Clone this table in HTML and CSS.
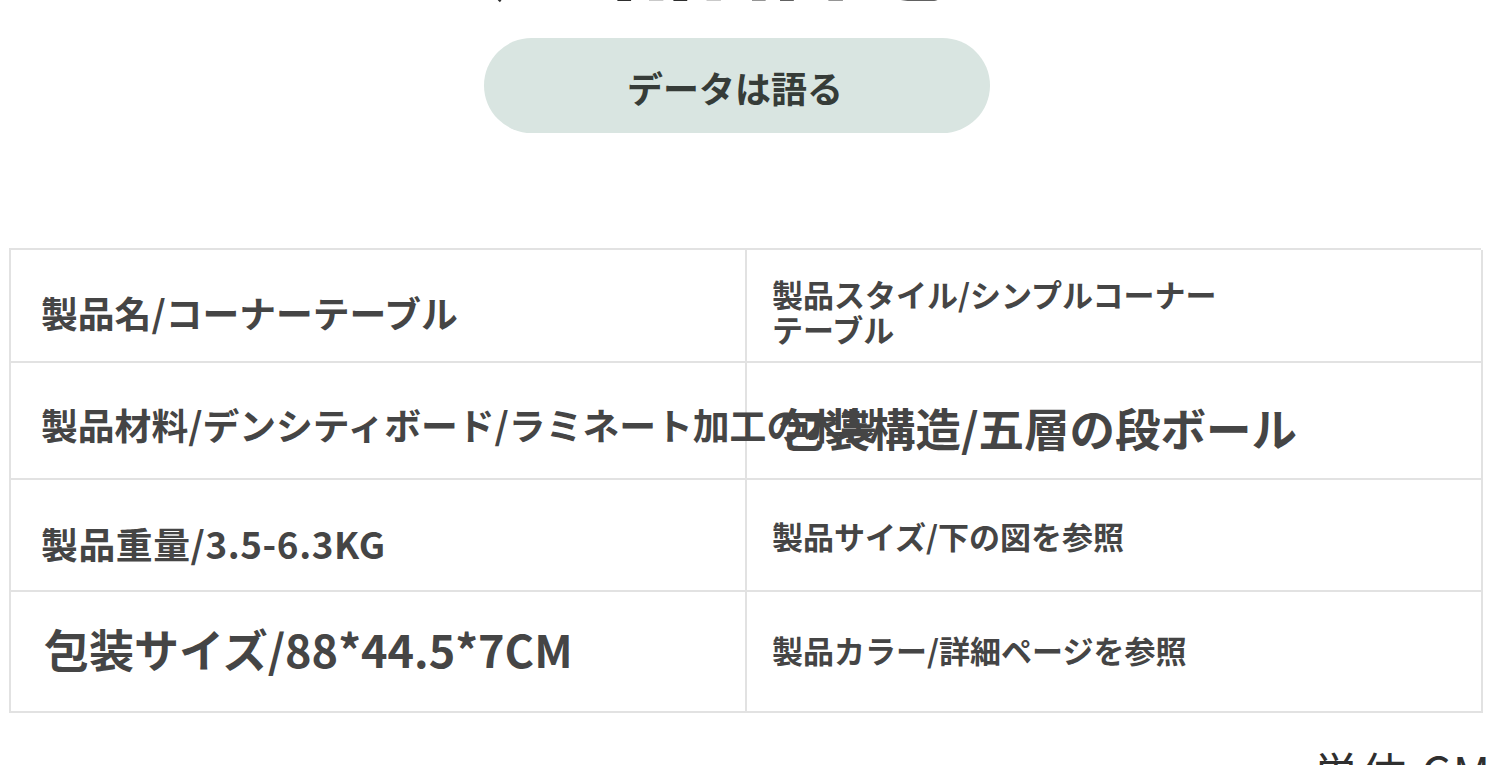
FILE: index.html
```html
<!DOCTYPE html>
<html lang="ja">
<head>
<meta charset="utf-8">
<title>データは語る</title>
<link rel="stylesheet" href="styles.css">
</head>
<body>
<div class="page">
  <div class="heading"><div class="heading-text">产品信息</div></div>
  <div class="pill">データは語る</div>
  <div class="spec">
    <div class="cell cell-l1"><span class="t-36">製品名/コーナーテーブル</span></div>
    <div class="cell cell-r cell-r1"><span class="t-30">製品スタイル/シンプルコーナー<br>テーブル</span></div>
    <div class="cell cell-l2"><span class="t-36 nowrap">製品材料/デンシティボード/ラミネート加工の木製</span></div>
    <div class="cell cell-r cell-r2"><span class="t-45 nowrap">包装構造/五層の段ボール</span></div>
    <div class="cell cell-l3"><span class="t-36 wide-latin">製品重量/3.5-6.3KG</span></div>
    <div class="cell cell-r"><span class="t-30">製品サイズ/下の図を参照</span></div>
    <div class="cell cell-l4"><span class="t-44">包装サイズ/88*44.5*7CM</span></div>
    <div class="cell cell-r cell-r4"><span class="t-30">製品カラー/詳細ページを参照</span></div>
  </div>
  <div class="unit">単位 CM</div>
</div>
</body>
</html>
```
FILE: styles.css
```css
html, body {
  margin: 0;
  padding: 0;
  background: #ffffff;
}
body {
  width: 1500px;
  height: 765px;
  overflow: hidden;
  font-family: "Noto Sans CJK JP", "Noto Sans", sans-serif;
  color: #4a4a4a;
}
.page {
  display: flex;
  flex-direction: column;
}
.heading {
  height: 6px;
  overflow: hidden;
  width: 506px;
  margin-left: 480px;
}
.heading-text {
  font-size: 120px;
  line-height: 120px;
  margin-top: -122px;
  font-weight: 700;
  color: #2e2e2e;
  text-align: center;
  letter-spacing: 4px;
}
.pill {
  margin-top: 32px;
  margin-left: 484px;
  width: 506px;
  height: 95px;
  border-radius: 48px;
  background: #d9e5e1;
  display: flex;
  align-items: center;
  justify-content: center;
  font-size: 36px;
  font-weight: 700;
  color: #363c38;
  padding-top: 2px;
  padding-right: 4px;
  box-sizing: border-box;
}
.spec {
  margin-top: 115px;
  margin-left: 9px;
  width: 1472px;
  box-sizing: border-box;
  display: grid;
  grid-template-columns: 736px 736px;
  grid-template-rows: 113px 117px 112px 121px;
  border-top: 2px solid #e2e2e2;
  border-left: 2px solid #e2e2e2;
}
.cell {
  border-right: 2px solid #e2e2e2;
  border-bottom: 2px solid #e2e2e2;
  display: flex;
  align-items: center;
  padding-left: 30px;
  min-width: 0;
  font-weight: 700;
  color: #454545;
}
.cell-r {
  padding-left: 25px;
}
.cell-l1 { padding-top: 12px; }
.cell-r1 { padding-top: 10px; }
.cell-l2 { padding-top: 6px; }
.cell-r2 { padding-left: 32px; padding-top: 12px; }
.cell-l3 { padding-top: 16px; }
.cell-l4 { padding-left: 33px; padding-bottom: 6px; }
.cell-r4 { padding-bottom: 4px; }
.t-30 {
  font-size: 31px;
  line-height: 35px;
}
.t-36 {
  font-size: 36.8px;
  line-height: 44px;
}
.wide-latin {
  letter-spacing: 0.6px;
}
.t-44 {
  font-size: 45px;
  line-height: 52px;
}
.t-45 {
  font-size: 45.5px;
  line-height: 54px;
}
.nowrap {
  white-space: nowrap;
}
.unit {
  margin-top: 34px;
  text-align: right;
  padding-right: 8px;
  font-size: 46px;
  line-height: 48px;
  font-weight: 400;
  color: #2f2f2f;
  letter-spacing: 2px;
}
```
